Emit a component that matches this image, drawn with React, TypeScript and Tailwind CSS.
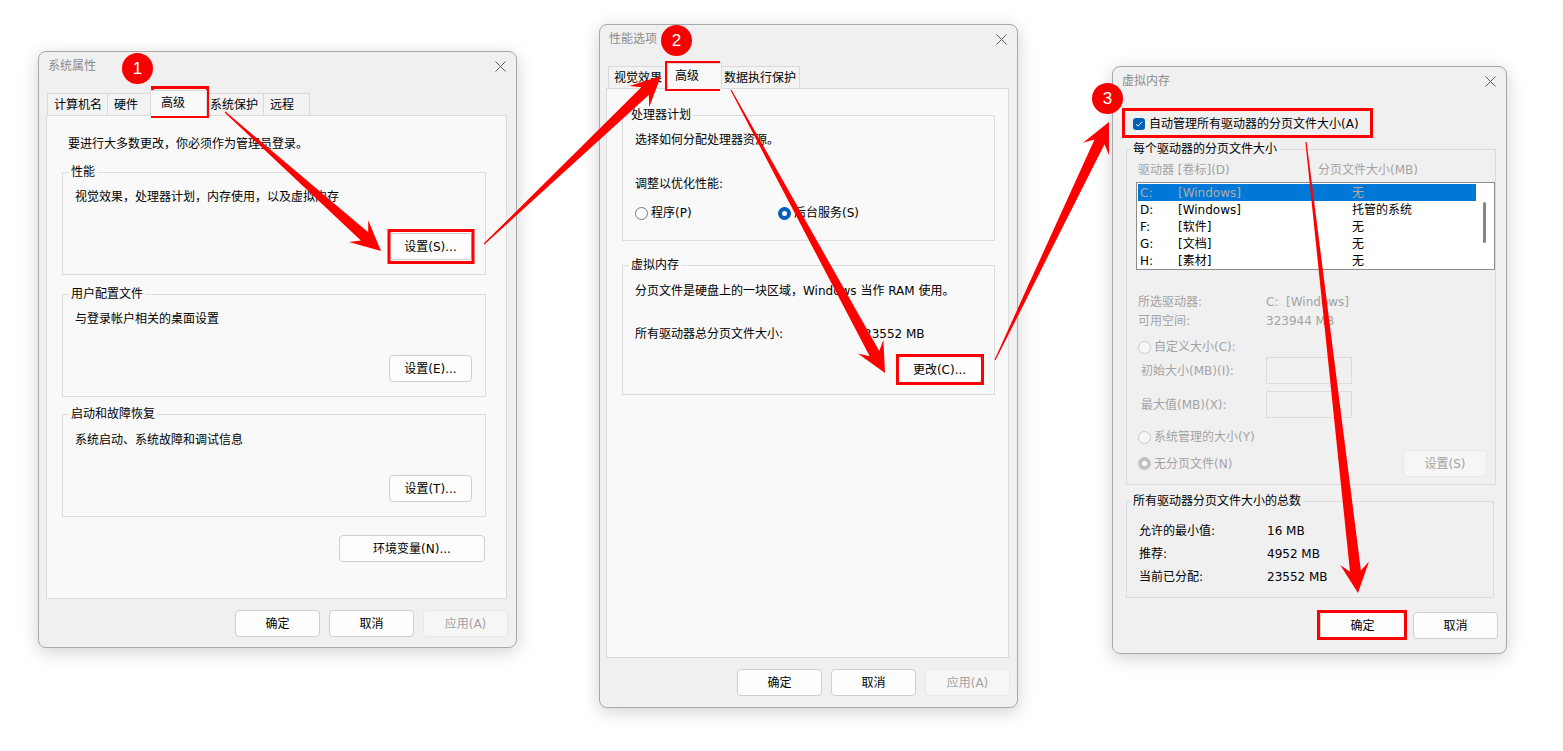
import React from "react";

type Tab = { label: string; cls: string; active?: boolean };

const FONT = "font-['DejaVu_Sans','Noto_Sans_CJK_SC',sans-serif]";

function CloseIcon() {
  return (
    <svg width="11" height="11" viewBox="0 0 11 11" className="shrink-0">
      <path d="M0.5 0.5 L10.5 10.5 M10.5 0.5 L0.5 10.5" stroke="#5c5c5c" strokeWidth="1" />
    </svg>
  );
}

function Window({ pos, title, children }: { pos: string; title: string; children: React.ReactNode }) {
  return (
    <div
      className={`absolute flex flex-col rounded-lg border border-[#a9a9a9] bg-[#f0f0f0] shadow-[0_4px_18px_rgba(0,0,0,0.18)] ${pos}`}
    >
      <div className="flex h-[28px] shrink-0 items-center justify-between pl-[9px] pr-[10px] text-[#8c8c8c]">
        <span>{title}</span>
        <CloseIcon />
      </div>
      {children}
    </div>
  );
}

function Tabs({ items, cls }: { items: Tab[]; cls: string }) {
  return (
    <div className={`flex h-[22px] shrink-0 items-end ${cls}`}>
      {items.map((t, i) => (
        <div
          key={t.label}
          className={`flex items-center whitespace-nowrap border-l border-r border-t border-[#d9d9d9] ${
            i > 0 ? "-ml-px" : ""
          } ${t.active ? "relative z-10 -mb-px h-[26px] bg-[#f9f9f9] pb-[2px]" : "h-[22px] bg-[#f3f3f3]"} ${t.cls}`}
        >
          {t.label}
        </div>
      ))}
    </div>
  );
}

function Btn({
  children,
  cls = "w-[85px]",
  disabled,
}: {
  children: React.ReactNode;
  cls?: string;
  disabled?: boolean;
}) {
  return (
    <button
      type="button"
      className={`flex h-[27px] shrink-0 items-center justify-center rounded-[4px] border ${
        disabled ? "border-[#e8e8e8] bg-[#f6f6f6] text-[#a3a3a3]" : "border-[#cfcfcf] bg-[#fdfdfd] text-black"
      } ${cls}`}
    >
      {children}
    </button>
  );
}

function Group({
  label,
  cls,
  legendCls = "ml-[6px]",
  children,
}: {
  label: string;
  cls: string;
  legendCls?: string;
  children: React.ReactNode;
}) {
  return (
    <fieldset className={`shrink-0 border border-[#dcdcdc] ${cls}`}>
      <legend className={`px-[2px] leading-[16px] ${legendCls}`}>{label}</legend>
      {children}
    </fieldset>
  );
}

function Radio({ state }: { state: "off" | "on" | "offDis" | "onDis" }) {
  if (state === "on")
    return (
      <span className="flex h-[13px] w-[13px] shrink-0 items-center justify-center rounded-full bg-[#005fb8]">
        <span className="h-[5px] w-[5px] rounded-full bg-white" />
      </span>
    );
  if (state === "onDis")
    return (
      <span className="flex h-[13px] w-[13px] shrink-0 items-center justify-center rounded-full bg-[#c2c2c2]">
        <span className="h-[5px] w-[5px] rounded-full bg-white" />
      </span>
    );
  return (
    <span
      className={`h-[13px] w-[13px] shrink-0 rounded-full border ${
        state === "off" ? "border-[#7a7a7a] bg-[#fbfbfb]" : "border-[#c9c9c9] bg-[#f7f7f7]"
      }`}
    />
  );
}

function Check() {
  return (
    <span className="flex h-[12px] w-[12px] shrink-0 items-center justify-center rounded-[3px] bg-[#005fb8]">
      <svg width="8" height="8" viewBox="0 0 8 8">
        <path d="M1 4.2 L3.1 6.2 L7 1.8" fill="none" stroke="white" strokeWidth="1" />
      </svg>
    </span>
  );
}

// tapered annotation arrow from a thin tail to a notched head
function arrowPoints(sx: number, sy: number, tx: number, ty: number) {
  const dx = tx - sx;
  const dy = ty - sy;
  const len = Math.hypot(dx, dy);
  const ux = dx / len;
  const uy = dy / len;
  const nx = -uy;
  const ny = ux;
  const at = (d: number, w: number) => [tx - ux * d + nx * w, ty - uy * d + ny * w];
  const pts = [
    [sx + nx * 0.6, sy + ny * 0.6],
    at(22, 5.5),
    at(30, 14.5),
    [tx, ty],
    at(30, -14.5),
    at(22, -5.5),
    [sx - nx * 0.6, sy - ny * 0.6],
  ];
  return pts.map((p) => `${p[0].toFixed(1)},${p[1].toFixed(1)}`).join(" ");
}

const arrows = [
  [225, 112, 381, 251],
  [484, 244, 661, 76],
  [731, 90, 885, 373],
  [995, 360, 1109, 122],
  [1306, 142, 1358, 593],
];

const boxes = [
  [152.5, 87.5, 55, 29],
  [389, 230.5, 84, 32],
  [666.5, 62.5, 52, 27],
  [897.5, 355.5, 85, 28],
  [1123.5, 109.5, 248, 27],
  [1318.5, 611.5, 87, 27],
];

const drives = [
  { d: "C:", l: "[Windows]", s: "无", sel: true },
  { d: "D:", l: "[Windows]", s: "托管的系统" },
  { d: "F:", l: "[软件]", s: "无" },
  { d: "G:", l: "[文档]", s: "无" },
  { d: "H:", l: "[素材]", s: "无" },
];

function SystemProps() {
  return (
    <Window pos="left-[38px] top-[51px] w-[479px] h-[597px]" title="系统属性">
      <Tabs
        cls="ml-[8px] mt-[13px]"
        items={[
          { label: "计算机名", cls: "w-[61px] pl-[6px]" },
          { label: "硬件", cls: "w-[44px] pl-[6px]" },
          { label: "高级", cls: "w-[57px] pl-[10px]", active: true },
          { label: "系统保护", cls: "w-[58px] pl-[3px]" },
          { label: "远程", cls: "w-[47px] pl-[6px]" },
        ]}
      />
      <div className="ml-[7px] h-[484px] w-[461px] shrink-0 border border-[#dadada] bg-[#f9f9f9] pt-[20px]">
        <p className="ml-[21px] leading-[16px]">要进行大多数更改，你必须作为管理员登录。</p>
        <Group cls="ml-[15px] mt-[12px] h-[111px] w-[424px]" label="性能">
          <div className="flex flex-col">
            <p className="mt-[9px] pl-[12px] leading-[16px]">视觉效果，处理器计划，内存使用，以及虚拟内存</p>
            <Btn cls="mr-[13px] mt-[28px] w-[83px] self-end">设置(S)...</Btn>
          </div>
        </Group>
        <Group cls="ml-[15px] mt-[11px] h-[111px] w-[424px]" label="用户配置文件">
          <div className="flex flex-col">
            <p className="mt-[9px] pl-[12px] leading-[16px]">与登录帐户相关的桌面设置</p>
            <Btn cls="mr-[13px] mt-[28px] w-[83px] self-end">设置(E)...</Btn>
          </div>
        </Group>
        <Group cls="ml-[15px] mt-[9px] h-[111px] w-[424px]" label="启动和故障恢复">
          <div className="flex flex-col">
            <p className="mt-[10px] pl-[12px] leading-[16px]">系统启动、系统故障和调试信息</p>
            <Btn cls="mr-[13px] mt-[27px] w-[83px] self-end">设置(T)...</Btn>
          </div>
        </Group>
        <div className="mt-[18px] flex justify-end pr-[21px]">
          <Btn cls="w-[146px]">环境变量(N)...</Btn>
        </div>
      </div>
      <div className="mt-[11px] flex justify-end gap-[9px] pr-[8px]">
        <Btn>确定</Btn>
        <Btn>取消</Btn>
        <Btn disabled>应用(A)</Btn>
      </div>
    </Window>
  );
}

function PerfOptions() {
  return (
    <Window pos="left-[599px] top-[24px] w-[419px] h-[684px]" title="性能选项">
      <Tabs
        cls="ml-[8px] mt-[13px]"
        items={[
          { label: "视觉效果", cls: "w-[60px] pl-[5px]" },
          { label: "高级", cls: "w-[55px] pl-[7px]", active: true },
          { label: "数据执行保护", cls: "w-[79px] pl-[2px]" },
        ]}
      />
      <div className="ml-[6px] h-[570px] w-[403px] shrink-0 border border-[#dadada] bg-[#f9f9f9] pt-[18px]">
        <Group cls="ml-[15px] h-[134px] w-[373px]" label="处理器计划">
          <div className="flex flex-col pl-[12px]">
            <p className="mt-[9px] leading-[16px]">选择如何分配处理器资源。</p>
            <p className="mt-[28px] leading-[16px]">调整以优化性能:</p>
            <div className="mt-[13px] flex leading-[16px]">
              <div className="flex w-[143px] items-center gap-[3px]">
                <Radio state="off" />
                <span>程序(P)</span>
              </div>
              <div className="flex items-center gap-[3px]">
                <Radio state="on" />
                <span>后台服务(S)</span>
              </div>
            </div>
          </div>
        </Group>
        <Group cls="ml-[15px] mt-[16px] h-[138px] w-[373px]" label="虚拟内存">
          <div className="flex flex-col">
            <p className="mt-[10px] pl-[12px] leading-[16px]">分页文件是硬盘上的一块区域，Windows 当作 RAM 使用。</p>
            <div className="mt-[27px] flex pl-[12px] leading-[16px]">
              <span className="w-[229px]">所有驱动器总分页文件大小:</span>
              <span>23552 MB</span>
            </div>
            <Btn cls="mr-[12px] mt-[14px] w-[85px] self-end">更改(C)...</Btn>
          </div>
        </Group>
      </div>
      <div className="mt-[11px] flex justify-end gap-[9px] pr-[7px]">
        <Btn>确定</Btn>
        <Btn>取消</Btn>
        <Btn disabled>应用(A)</Btn>
      </div>
    </Window>
  );
}

function VirtualMemory() {
  return (
    <Window pos="left-[1112px] top-[66px] w-[395px] h-[588px]" title="虚拟内存">
      <div className="mt-[21px] flex h-[16px] shrink-0 items-center gap-[4px] pl-[20px]">
        <Check />
        <span>自动管理所有驱动器的分页文件大小(A)</span>
      </div>
      <Group cls="ml-[13px] mt-[9px] h-[344px] w-[368px]" legendCls="ml-[4px]" label="每个驱动器的分页文件大小">
        <div className="flex flex-col text-[#a3a3a3]">
          <div className="mt-[5px] flex pl-[11px] leading-[16px]">
            <span className="w-[180px]">驱动器 [卷标](D)</span>
            <span>分页文件大小(MB)</span>
          </div>
          <div className="ml-[9px] mt-[4px] flex h-[88px] w-[359px] overflow-hidden border border-[#8c8c8c] bg-white">
            <div className="w-[339px] pl-px pt-px">
              {drives.map((r) => (
                <div
                  key={r.d}
                  className={`flex h-[17px] items-center pl-[2px] ${
                    r.sel ? "bg-[#0078d7] text-[#b3aaa4]" : "text-black"
                  }`}
                >
                  <span className="w-[38px]">{r.d}</span>
                  <span className="w-[174px]">{r.l}</span>
                  <span>{r.s}</span>
                </div>
              ))}
            </div>
            <div className="w-[18px]">
              <div className="ml-[7px] mt-[19px] h-[41px] w-[3px] rounded-full bg-[#858585]" />
            </div>
          </div>
          <div className="mt-[24px] flex pl-[11px] leading-[16px]">
            <span className="w-[128px]">所选驱动器:</span>
            <span>C:&nbsp; [Windows]</span>
          </div>
          <div className="mt-[3px] flex pl-[11px] leading-[16px]">
            <span className="w-[128px]">可用空间:</span>
            <span>323944 MB</span>
          </div>
          <div className="mt-[10px] flex items-center gap-[3px] pl-[11px] leading-[16px]">
            <Radio state="offDis" />
            <span>自定义大小(C):</span>
          </div>
          <div className="mt-[2px] flex h-[27px] items-center pl-[14px]">
            <span className="w-[125px]">初始大小(MB)(I):</span>
            <span className="h-[27px] w-[86px] border border-[#dcdcdc]" />
          </div>
          <div className="mt-[7px] flex h-[27px] items-center pl-[14px]">
            <span className="w-[125px]">最大值(MB)(X):</span>
            <span className="h-[27px] w-[86px] border border-[#dcdcdc]" />
          </div>
          <div className="mt-[11px] flex items-center gap-[3px] pl-[11px] leading-[16px]">
            <Radio state="offDis" />
            <span>系统管理的大小(Y)</span>
          </div>
          <div className="mt-[5px] flex h-[27px] items-center justify-between pl-[11px] pr-[8px]">
            <div className="flex items-center gap-[3px]">
              <Radio state="onDis" />
              <span>无分页文件(N)</span>
            </div>
            <Btn cls="w-[84px]" disabled>
              设置(S)
            </Btn>
          </div>
        </div>
      </Group>
      <Group cls="ml-[13px] mt-[8px] h-[105px] w-[368px]" legendCls="ml-[4px]" label="所有驱动器分页文件大小的总数">
        <div className="mt-[14px] flex flex-col gap-[7px] pl-[12px] leading-[16px]">
          <div className="flex">
            <span className="w-[128px]">允许的最小值:</span>
            <span>16 MB</span>
          </div>
          <div className="flex">
            <span className="w-[128px]">推荐:</span>
            <span>4952 MB</span>
          </div>
          <div className="flex">
            <span className="w-[128px]">当前已分配:</span>
            <span>23552 MB</span>
          </div>
        </div>
      </Group>
      <div className="mt-[14px] flex justify-end gap-[8px] pr-[8px]">
        <Btn>确定</Btn>
        <Btn>取消</Btn>
      </div>
    </Window>
  );
}

function Marker({ n, cls }: { n: string; cls: string }) {
  return (
    <div
      className={`absolute flex h-[31px] w-[31px] items-center justify-center rounded-full bg-[#f70000] font-['Liberation_Sans',sans-serif] text-[17px] text-white ${cls}`}
    >
      {n}
    </div>
  );
}

export default function App() {
  return (
    <div className={`relative h-[751px] w-[1563px] overflow-hidden bg-white text-[12px] text-black ${FONT}`}>
      <SystemProps />
      <PerfOptions />
      <VirtualMemory />

      <svg className="pointer-events-none absolute left-0 top-0" width="1563" height="751">
        {boxes.map(([x, y, w, h], i) => (
          <rect key={i} x={x} y={y} width={w} height={h} fill="none" stroke="#ff0000" strokeWidth="3" />
        ))}
        {arrows.map(([sx, sy, tx, ty], i) => (
          <polygon key={i} points={arrowPoints(sx, sy, tx, ty)} fill="#ff0000" />
        ))}
      </svg>

      <Marker n="1" cls="left-[122px] top-[53px]" />
      <Marker n="2" cls="left-[661px] top-[25px]" />
      <Marker n="3" cls="left-[1092px] top-[83px]" />
    </div>
  );
}
